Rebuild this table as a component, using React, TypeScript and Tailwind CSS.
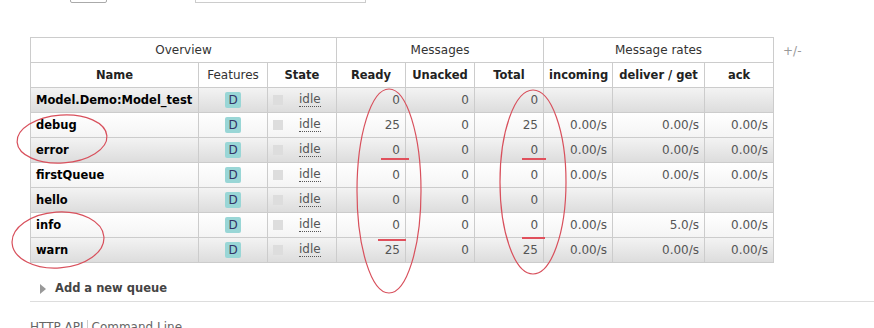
const queues = [
  { name: "Model.Demo:Model_test", ready: "0", unacked: "0", total: "0", rates: null },
  { name: "debug", ready: "25", unacked: "0", total: "25", rates: ["0.00/s", "0.00/s", "0.00/s"] },
  { name: "error", ready: "0", unacked: "0", total: "0", rates: ["0.00/s", "0.00/s", "0.00/s"] },
  { name: "firstQueue", ready: "0", unacked: "0", total: "0", rates: ["0.00/s", "0.00/s", "0.00/s"] },
  { name: "hello", ready: "0", unacked: "0", total: "0", rates: null },
  { name: "info", ready: "0", unacked: "0", total: "0", rates: ["0.00/s", "5.0/s", "0.00/s"] },
  { name: "warn", ready: "25", unacked: "0", total: "25", rates: ["0.00/s", "0.00/s", "0.00/s"] },
];

const cell = "border border-[#cccccc] h-[25px] px-[5px] py-0 whitespace-nowrap overflow-hidden leading-[14px]";
const num = cell + " text-right text-[#555]";
const bold = cell + " font-bold text-[11.5px] text-[#222]";

export default function App() {
  return (
    <div
      className="relative w-[874px] h-[328px] overflow-hidden bg-white text-[12px] text-[#333]"
      style={{ fontFamily: '"DejaVu Sans", Verdana, sans-serif' }}
    >
      {/* inputs cut off at the top */}
      <div className="flex items-end h-[3px]">
        <div className="ml-[70px] w-[37px] h-[22px] border border-[#aaa] rounded-[2px] shrink-0" />
        <div className="ml-[88px] w-[171px] h-[22px] border border-[#ccc] shrink-0" />
      </div>

      <div className="flex items-start mt-[34px] ml-[30px]">
        <table className="border-collapse table-fixed w-[743px]">
          <colgroup>
            <col className="w-[168px]" />
            <col className="w-[69px]" />
            <col className="w-[69px]" />
            <col className="w-[69px]" />
            <col className="w-[69px]" />
            <col className="w-[69px]" />
            <col className="w-[69px]" />
            <col className="w-[92px]" />
            <col className="w-[69px]" />
          </colgroup>
          <thead>
            <tr>
              <th colSpan={3} className={cell + " font-normal text-center"}>Overview</th>
              <th colSpan={3} className={cell + " font-normal text-center"}>Messages</th>
              <th colSpan={3} className={cell + " font-normal text-center"}>Message rates</th>
            </tr>
            <tr>
              <th className={bold}>Name</th>
              <th className={cell + " font-normal px-[2px]"}>Features</th>
              <th className={bold}>State</th>
              <th className={bold}>Ready</th>
              <th className={bold + " px-[2px]"}>Unacked</th>
              <th className={bold}>Total</th>
              <th className={bold + " px-[2px]"}>incoming</th>
              <th className={bold + " px-[2px]"}>deliver / get</th>
              <th className={bold}>ack</th>
            </tr>
          </thead>
          <tbody>
            {queues.map((q, i) => (
              <tr
                key={q.name}
                className={
                  i % 2 === 0
                    ? "bg-gradient-to-b from-[#f3f3f3] to-[#dcdcdc]"
                    : "bg-gradient-to-b from-[#ffffff] to-[#f4f4f4]"
                }
              >
                <td className={bold + " text-black"}>{q.name}</td>
                <td className={cell + " text-center"}>
                  <span className="inline-block px-[3px] leading-[16px] bg-[#99d6d6] text-[#336] rounded-[2px]">D</span>
                </td>
                <td className={cell}>
                  <div className="flex items-center">
                    <span className="w-[10px] h-[10px] bg-[#dddddd] shrink-0" />
                    <span className="ml-[16px] text-[#555] border-b border-dotted border-[#555] leading-[13px]">idle</span>
                  </div>
                </td>
                <td className={num}>{q.ready}</td>
                <td className={num}>{q.unacked}</td>
                <td className={num}>{q.total}</td>
                <td className={num}>{q.rates ? q.rates[0] : ""}</td>
                <td className={num}>{q.rates ? q.rates[1] : ""}</td>
                <td className={num}>{q.rates ? q.rates[2] : ""}</td>
              </tr>
            ))}
          </tbody>
        </table>
        <span className="ml-[9px] mt-[5px] text-[#999]">+/-</span>
      </div>

      <div className="ml-[30px] mt-[17px] border-b border-[#dddddd] pb-[4px]">
        <div className="flex items-center pl-[10px]">
          <span className="w-0 h-0 border-y-[5px] border-y-transparent border-l-[6px] border-l-[#999]" />
          <span className="ml-[9px] font-bold text-[11.5px] text-[#444]">Add a new queue</span>
        </div>
      </div>

      <div className="flex ml-[30px] mt-[18px] text-[#666] text-[12px] leading-[14px]">
        <span className="pr-[3px] border-r border-[#ccc]">HTTP API</span>
        <span className="pl-[4px]">Command Line</span>
      </div>

      {/* red hand-drawn annotations */}
      <svg className="absolute left-0 top-0 pointer-events-none" width="874" height="328" viewBox="0 0 874 328" fill="none">
        <g stroke="#d8505c" strokeWidth="1.2">
          <ellipse cx="62" cy="139" rx="45" ry="24" transform="rotate(-4 62 139)" />
          <ellipse cx="58" cy="240" rx="46" ry="28" transform="rotate(-4 58 240)" />
          <ellipse cx="389" cy="191" rx="32" ry="102" />
          <ellipse cx="533" cy="182" rx="33" ry="92" />
        </g>
        <g stroke="#e0505c" strokeWidth="2">
          <line x1="381" y1="159" x2="409" y2="159" />
          <line x1="378" y1="240" x2="406" y2="240" />
          <line x1="522" y1="159" x2="546" y2="159" />
          <line x1="522" y1="238" x2="545" y2="238" />
        </g>
      </svg>
    </div>
  );
}
